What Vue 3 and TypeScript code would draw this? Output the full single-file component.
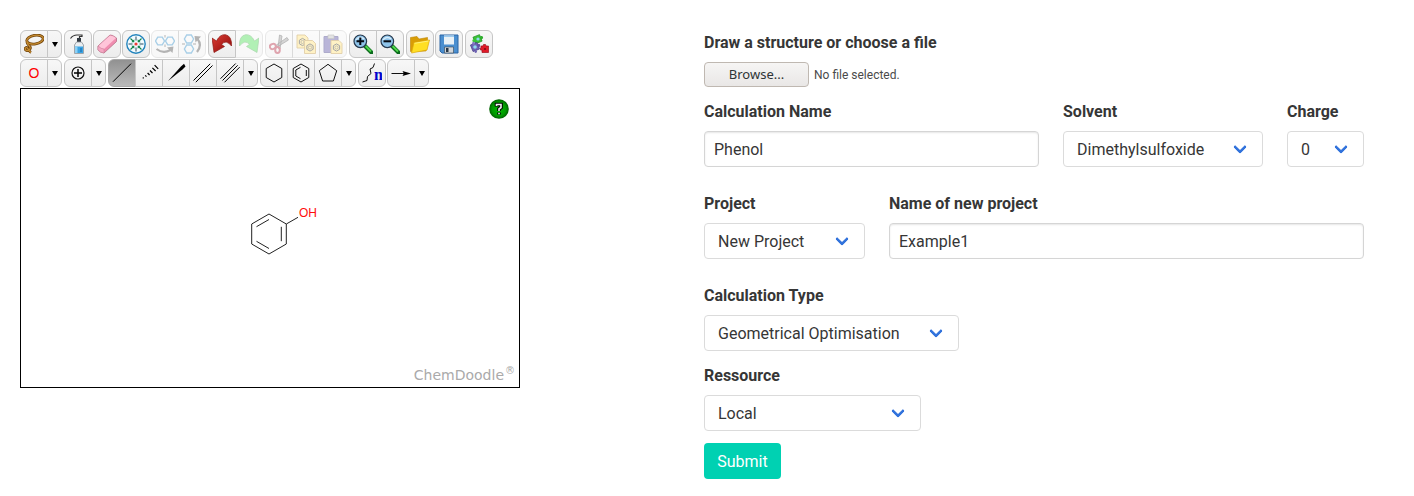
<script setup lang="ts">
import { ref } from 'vue'

interface Tool {
  label: string
  icon: string
  off?: boolean
  active?: boolean
  drop?: boolean
}
interface Group {
  tight?: boolean
  tools: Tool[]
}

const drop: Tool = { label: 'More options', icon: '', drop: true }

const hexagon = (cx: number, cy: number, r: number): string => {
  const h = r * 0.866
  return `M${cx} ${cy - r}L${cx + h} ${cy - r / 2}V${cy + r / 2}L${cx} ${cy + r}L${cx - h} ${cy + r / 2}V${cy - r / 2}Z`
}

const lens = (sign: string): string =>
  `<path d="M12 12L18.500 18.500" stroke="#0a6b1c" stroke-width="4" stroke-linecap="round"/><path d="M12.500 12L18 17.500" stroke="#4fd54b" stroke-width="2"/><circle cx="7.300" cy="7.300" r="6.300" fill="#8fc4ea" stroke="#26384c" stroke-width="1.200"/><path d="M3 6a5 5 0 0 1 8 -1" fill="none" stroke="#d7edfb" stroke-width="1.500"/><path d="${sign}" stroke="#050a12" stroke-width="2"/>`

const undoShape = 'M0 4L2 18.500L12.500 12.500L9.500 10.500Q14 5 19.500 12Q20 2 13.500 .7Q8 0 4.500 7Z'

const noteArt = (x: number, y: number): string =>
  `<path d="M${x} ${y}h8l3 3v10h-11z" fill="#ffe070" stroke="#b88a28" stroke-width=".9"/><path d="${hexagon(x + 5.5, y + 7, 3.6)}" fill="none" stroke="#222" stroke-width="1"/><circle cx="${x + 5.5}" cy="${y + 7}" r="1.600" fill="none" stroke="#222" stroke-width=".6"/>`

const topRow: Group[] = [
  {
    tools: [
      {
        label: 'Lasso',
        icon: '<g fill="none"><g stroke="#704208" stroke-width="2.800"><ellipse cx="11" cy="5.600" rx="8.300" ry="4.300" transform="rotate(-10 11 5.600)"/><path d="M3 8C3 12 8 12 6 15C4 18 0 16 1.500 14C4 12 4 17 7 18.500"/></g><g stroke="#c58c32" stroke-width="1.300"><ellipse cx="11" cy="5.600" rx="8.300" ry="4.300" transform="rotate(-10 11 5.600)"/><path d="M3 8C3 12 8 12 6 15C4 18 0 16 1.500 14C4 12 4 17 7 18.500"/></g></g>',
      },
      drop,
    ],
  },
  {
    tools: [
      {
        label: 'Clear',
        icon: '<path d="M2.500 4.500Q5 1 9 1H14V2.500H11.500V5" fill="none" stroke="#333" stroke-width="1.200"/><path d="M9 4h4v4h-4z" fill="#303840"/><path d="M8.500 8h5l2 3v8.500h-9v-8.500z" fill="#e9edf0" stroke="#8a9299" stroke-width=".8"/><path d="M7 12.500h8v6.500h-8z" fill="#3ba4e4"/><path d="M7 12.500h2.500v6.500h-2.500z" fill="#8bd0f5"/><path d="M13 14v4" stroke="#1769a8"/>',
      },
    ],
  },
  {
    tight: true,
    tools: [
      {
        label: 'Eraser',
        icon: '<path d="M1 12L13 1Q15 .5 19.500 4V7.500L7 19Q3 18.500 1 16z" fill="#f08db0" stroke="#b66e87" stroke-width=".8"/><path d="M1.500 12L13 1.500Q16 1.500 19 4L7 15Q4 15 1.500 12z" fill="#ffc5d9"/><path d="M1 12Q4 15 7 15V19Q3 18.500 1 16z" fill="#f5a8c3" stroke="#c7829a" stroke-width=".5"/>',
      },
    ],
  },
  {
    tight: true,
    tools: [
      {
        label: 'Optimize structure',
        icon: '<circle cx="10" cy="10" r="9.200" fill="#f2fbff" stroke="#2384bd" stroke-width="1.400"/><path d="M4.500 4.500L7.500 7.500M15.500 4.500L12.500 7.500M4.500 15.500L7.500 12.500M15.500 15.500L12.500 12.500" stroke="#13834a" stroke-width="1.100"/><path d="M8.300 5.300V8.300H5.300zM11.700 5.300V8.300H14.700zM8.300 14.700V11.700H5.300zM11.700 14.700V11.700H14.700z" fill="#13834a"/><path d="M10 2.500V6.500M10 13.500V17.500M2.500 10H6.500M13.500 10H17.500" stroke="#27485c" stroke-width="1"/><circle cx="10" cy="10" r="1.600" fill="#ee3c35"/>',
      },
    ],
  },
  {
    tight: true,
    tools: [
      {
        label: 'Flip horizontally',
        off: true,
        icon: `<g fill="none" stroke="#2888c4" stroke-width="1.400"><path transform="rotate(90 5 7)" d="${hexagon(5, 7, 4.5)}"/><path transform="rotate(90 15 7)" d="${hexagon(15, 7, 4.5)}"/></g><path d="M10 1v2.500M10 10.500v2.500" stroke="#444"/><path d="M1.500 15Q8 20 15.500 16" fill="none" stroke="#444" stroke-width="2.200"/><path d="M12 13.500L18.500 12.500L17.500 19z" fill="#444"/>`,
      },
      {
        label: 'Flip vertically',
        off: true,
        icon: `<g fill="none" stroke="#2888c4" stroke-width="1.400"><path transform="rotate(90 7 5)" d="${hexagon(7, 5, 4.6)}"/><path transform="rotate(90 7 15)" d="${hexagon(7, 15, 4.6)}"/></g><path d="M0 10h3M11 10h3" stroke="#444"/><path d="M15 18Q20.500 11 15.500 5" fill="none" stroke="#444" stroke-width="2.200"/><path d="M12.500 2L19 2.500L13.500 8.500z" fill="#444"/>`,
      },
    ],
  },
  {
    tools: [
      {
        label: 'Undo',
        icon: `<defs><linearGradient id="undoRed" x2="1" y2="1"><stop stop-color="#df3f36"/><stop offset="1" stop-color="#8a0808"/></linearGradient></defs><path d="${undoShape}" fill="url(#undoRed)" stroke="#8d1712" stroke-width=".7"/>`,
      },
      {
        label: 'Redo',
        off: true,
        icon: `<path transform="translate(20 0) scale(-1 1)" d="${undoShape}" fill="#3fdc48" stroke="#2f9a38" stroke-width=".7"/>`,
      },
    ],
  },
  {
    tools: [
      {
        label: 'Cut',
        off: true,
        icon: '<path d="M6 12L18 3.500L19.500 6L8 13zM9 14L10.500 1L13 2L11 15z" fill="#999" stroke="#444" stroke-width=".8"/><g fill="none" stroke="#b01d36" stroke-width="2"><ellipse cx="3.800" cy="12.500" rx="3" ry="2.500" transform="rotate(-20 3.800 12.500)"/><ellipse cx="8.500" cy="16" rx="2.300" ry="3"/></g>',
      },
      { label: 'Copy', off: true, icon: noteArt(1, 1) + noteArt(8.5, 6.5) },
      {
        label: 'Paste',
        off: true,
        icon: `<path d="M1 2.500h14v16h-14z" fill="#5248a0" stroke="#373080"/><path d="M5 1h6v3.500h-6z" fill="#bbb" stroke="#777" stroke-width=".7"/>${noteArt(8, 6.5)}`,
      },
    ],
  },
  {
    tools: [
      { label: 'Zoom in', icon: lens('M3.500 7.300H11.100M7.300 3.500V11.100') },
      { label: 'Zoom out', icon: lens('M3.500 7.300H11.100') },
    ],
  },
  {
    tools: [
      {
        label: 'Open',
        icon: '<path d="M.5 17.500V3.500L7 2.500L9 5L17.500 3.500V9L16 17z" fill="#d99d05" stroke="#bd8505" stroke-width=".6"/><path d="M4 8.500L19.500 6L17 16L1.500 19z" fill="#ffdf24" stroke="#dca80a" stroke-width=".7"/><path d="M4.500 9.300L18.500 7" stroke="#fff07b"/>',
      },
    ],
  },
  {
    tight: true,
    tools: [
      {
        label: 'Save',
        icon: '<path d="M1 1h18v18H3L1 17z" fill="#4a8fd0" stroke="#2a64a4"/><path d="M5 1.500h10v9H5z" fill="#e9f1f6"/><path d="M5 1.500h10v1.500H5z" fill="#9dcaed"/><path d="M5.500 13h9v6h-9z" fill="#d2d6da" stroke="#344452" stroke-width=".6"/><path d="M7 14h2.500v4H7z" fill="#263645"/>',
      },
    ],
  },
  {
    tools: [
      {
        label: 'Templates',
        icon: '<g transform="rotate(-22 9 5)"><path d="M5 1.500h7v7H5z" fill="#3bc437" stroke="#1f8f25" stroke-width=".7"/><circle cx="4.500" cy="5" r="1.500" fill="#3bc437"/><circle cx="12.800" cy="5" r="1.600" fill="#2fae2d"/></g><g transform="rotate(-22 6 13)"><path d="M2.500 9.500h7v7h-7z" fill="#6f63b4" stroke="#463c88" stroke-width=".7"/><circle cx="6" cy="9" r="1.500" fill="#8478c4"/><circle cx="10" cy="13" r="1.600" fill="#5f53a6"/><circle cx="5" cy="17.500" r="1.300" fill="#6f63b4"/></g><path d="M12 12h2l.5-1.500h2L17 12h2.500v6.500H13V16h-1.500v-2H12z" fill="#e01a28" stroke="#9e101c" stroke-width=".7"/><g fill="#8fd8ee"><circle cx="9" cy="5" r="1.600"/><circle cx="6" cy="13" r="1.800"/></g><circle cx="16" cy="15" r="1.100" fill="#7a0a14"/>',
      },
    ],
  },
]

const bottomRow: Group[] = [
  {
    tools: [
      {
        label: 'Oxygen',
        icon: '<text x="10" y="15" text-anchor="middle" font-family="Liberation Sans, sans-serif" font-size="14" fill="#f00">O</text>',
      },
      drop,
    ],
  },
  {
    tools: [
      {
        label: 'Increase charge',
        icon: '<circle cx="10" cy="10" r="6" fill="none" stroke="#111" stroke-width="1.200"/><path d="M6 10H14M10 6V14" stroke="#000" stroke-width="1.500"/>',
      },
      drop,
    ],
  },
  {
    tools: [
      { label: 'Single bond', active: true, icon: '<path d="M1 18.700L19 .7" stroke="#000"/>' },
      {
        label: 'Recessed bond',
        icon: '<path d="M3.800 14.500l.8.800M6.200 12.300l1.300 1.300M8.600 10l2 2M11 7.500l2.500 2.500M13.400 4.800l3.200 3.200M15.600 2.200l3.600 3.600" stroke="#000" stroke-width="1.200"/>',
      },
      { label: 'Protruding bond', icon: '<path d="M2 18L14.700 3.700L18 .7L19.500 3.500L16.500 6.500z" fill="#000"/>' },
      { label: 'Double bond', icon: '<path d="M.5 17.500L17.200 .8M2.800 19.200L19.500 2.500" stroke="#000"/>' },
      { label: 'Triple bond', icon: '<path d="M.5 15.700L15.700 .5M2.500 17.500L17.700 2.300M4.500 19.300L19.700 4.100" stroke="#000"/>' },
      drop,
    ],
  },
  {
    tools: [
      { label: 'Cyclohexane ring', icon: `<path d="${hexagon(10, 10, 9)}" fill="none" stroke="#111"/>` },
      {
        label: 'Benzene ring',
        icon: `<path d="${hexagon(10, 10, 9)}M9.500 4.300L4.800 7V13L9.500 15.700M15.300 7V13" fill="none" stroke="#111"/>`,
      },
      { label: 'Cyclopentane ring', icon: '<path d="M10 1.300L18.700 7.700L15.400 18H4.600L1.300 7.700Z" fill="none" stroke="#111"/>' },
      drop,
    ],
  },
  {
    tools: [
      {
        label: 'Carbon chain',
        icon: '<path d="M.5 19L5 17.500L5.500 13.500L9 10.500L8 6L11 4.500L12.500 .5" fill="none" stroke="#111"/><text x="12" y="17" font-family="Liberation Serif, serif" font-weight="700" font-size="16" fill="#00c">n</text>',
      },
    ],
  },
  {
    tight: true,
    tools: [
      { label: 'Arrow', icon: '<path d="M.5 10.500H14" stroke="#111"/><path d="M11.500 8L20 10.500L11.500 13L12.800 10.500z" fill="#000"/>' },
      drop,
    ],
  },
]

const rows: Group[][] = [topRow, bottomRow]

const calculationName = ref<string>('Phenol')
const solvent = ref<string>('Dimethylsulfoxide')
const charge = ref<string>('0')
const project = ref<string>('New Project')
const projectName = ref<string>('Example1')
const calculationType = ref<string>('Geometrical Optimisation')
const resource = ref<string>('Local')
const fileName = ref<string>('No file selected.')
const picker = ref<HTMLInputElement | null>(null)

function onFile(event: Event): void {
  const files = (event.target as HTMLInputElement).files
  fileName.value = files && files.length ? files[0].name : 'No file selected.'
}
</script>

<template>
  <main class="page">
    <section class="sketcher" aria-label="Structure editor">
      <div v-for="(row, r) in rows" :key="r" class="toolbar">
        <div v-for="(group, g) in row" :key="g" class="group" :class="{ tight: group.tight }">
          <button
            v-for="(tool, t) in group.tools"
            :key="t"
            type="button"
            class="tool"
            :class="{ drop: tool.drop, active: tool.active }"
            :disabled="tool.off"
            :aria-label="tool.label"
          >
            <svg v-if="tool.drop" width="6" height="5" viewBox="0 0 6 5"><path d="M0 0H6L3 5z" /></svg>
            <svg v-else width="20" height="20" viewBox="0 0 20 20" v-html="tool.icon"></svg>
          </button>
        </div>
      </div>
      <div class="canvas">
        <svg class="molecule" width="72" height="56" viewBox="0 0 72 56" role="img" aria-label="Phenol">
          <path
            d="M21 10L38.300 20V40L21 50L3.700 40V20ZM21 15.500L8.500 22.700M8.500 37.300L21 44.500M33.300 22.800V37.200M38.300 20L50 13.300"
            fill="none"
            stroke="#222"
          />
          <text x="51" y="13">OH</text>
        </svg>
        <button type="button" class="help" aria-label="Help">
          <svg width="20" height="20" viewBox="0 0 20 20">
            <defs>
              <radialGradient id="helpGreen">
                <stop offset="0" stop-color="#00b800" />
                <stop offset=".7" stop-color="#009b00" />
                <stop offset="1" stop-color="#006000" />
              </radialGradient>
            </defs>
            <circle cx="10" cy="10" r="9.800" fill="url(#helpGreen)" />
            <g fill="none">
              <path d="M7.500 7.500V5.500H12V8.500L10 10V12M10 13.500V15.500" stroke="#000" stroke-width="3.600" />
              <path d="M7.500 7V5.500H12V8.500L10 10V12M10 13.700V15.200" stroke="#eee" stroke-width="1.600" />
            </g>
          </svg>
        </button>
        <div class="brand">ChemDoodle<span class="mark">®</span></div>
      </div>
    </section>

    <form class="form" @submit.prevent>
      <div class="field">
        <label for="file">Draw a structure or choose a file</label>
        <div class="file">
          <button type="button" class="browse" @click="picker?.click()">Browse...</button>
          <span>{{ fileName }}</span>
          <input id="file" ref="picker" type="file" hidden @change="onFile" />
        </div>
      </div>

      <div class="columns">
        <div class="field grow">
          <label for="name">Calculation Name</label>
          <input id="name" v-model="calculationName" class="input" type="text" />
        </div>
        <div class="field">
          <label for="solvent">Solvent</label>
          <div class="select solvent">
            <select id="solvent" v-model="solvent"><option>Dimethylsulfoxide</option></select>
          </div>
        </div>
        <div class="field">
          <label for="charge">Charge</label>
          <div class="select charge">
            <select id="charge" v-model="charge"><option>0</option></select>
          </div>
        </div>
      </div>

      <div class="columns">
        <div class="field">
          <label for="project">Project</label>
          <div class="select project">
            <select id="project" v-model="project"><option>New Project</option></select>
          </div>
        </div>
        <div class="field grow">
          <label for="project-name">Name of new project</label>
          <input id="project-name" v-model="projectName" class="input" type="text" />
        </div>
      </div>

      <div class="field">
        <label for="type">Calculation Type</label>
        <div class="select type">
          <select id="type" v-model="calculationType"><option>Geometrical Optimisation</option></select>
        </div>
      </div>
      <div class="field">
        <label for="resource">Ressource</label>
        <div class="select resource">
          <select id="resource" v-model="resource"><option>Local</option></select>
        </div>
      </div>
      <button type="submit" class="submit">Submit</button>
    </form>
  </main>
</template>

<style>
body {
  margin: 0;
  background: #fff;
}
</style>

<style scoped>
.page,
.page * {
  box-sizing: border-box;
}
.page {
  display: grid;
  grid-template-columns: 342fr 330fr;
  align-items: start;
  padding: 30px 50px 16px 20px;
  font: 16px/24px Roboto, sans-serif;
  color: #363636;
}
.sketcher {
  max-width: 500px;
}
.toolbar {
  display: flex;
  gap: 2px;
  margin-bottom: 1px;
}
.group {
  display: flex;
}
.group.tight {
  margin-left: -1px;
}
.tool {
  display: flex;
  align-items: center;
  justify-content: center;
  width: 28px;
  height: 28px;
  padding: 0;
  border: 1px solid #c6c6c6;
  background: linear-gradient(#f7f7f7, #ededed);
}
.tool + .tool {
  margin-left: -1px;
}
.tool svg {
  display: block;
  flex: none;
}
.tool:first-child {
  border-top-left-radius: 6px;
  border-bottom-left-radius: 6px;
}
.tool:last-child {
  border-top-right-radius: 6px;
  border-bottom-right-radius: 6px;
}
.tool.drop {
  width: 15px;
}
.tool.active {
  border-color: #aaa;
  background: linear-gradient(#919191, #bababa);
}
.tool:disabled {
  opacity: 0.4;
}
.canvas {
  display: flex;
  position: relative;
  height: 300px;
  border: 1px solid #000;
  background: #fff;
}
.molecule {
  position: absolute;
  left: 227px;
  top: 115px;
}
.molecule text {
  font: 12px 'Liberation Sans', sans-serif;
  fill: #ff0d0d;
}
.help {
  position: absolute;
  top: 10px;
  right: 10px;
  padding: 0;
  border: 0;
  border-radius: 50%;
  background: none;
}
.help svg {
  display: block;
}
.brand {
  display: flex;
  align-items: flex-start;
  gap: 1px;
  margin: auto 4px 2px auto;
  font: 14px/20px 'DejaVu Sans', sans-serif;
  color: #aaa;
}
.mark {
  font-size: 10px;
  line-height: 12px;
}
.form {
  display: flex;
  flex-direction: column;
  gap: 12px;
}
.field label {
  display: block;
  margin-bottom: 6px;
  font-weight: 700;
  line-height: 26px;
}
.grow {
  flex: 1;
  min-width: 0;
}
.file {
  display: flex;
  align-items: center;
  gap: 5px;
  height: 25px;
  font-size: 12px;
  line-height: 26px;
  color: #4a4a4a;
}
.browse {
  width: 105px;
  height: 25px;
  padding: 0 0 2px;
  border: 1px solid #bfb8b1;
  border-radius: 4px;
  background: linear-gradient(#f6f5f4, #e9e7e6);
  font: 13px/20px 'Noto Sans', sans-serif;
  color: #2e3436;
}
.columns {
  display: flex;
  gap: 24px;
  margin-bottom: 12px;
}
.input,
.select select {
  display: block;
  width: 100%;
  height: 36px;
  border: 1px solid #dbdbdb;
  border-radius: 4px;
  background: #fff;
  font: 16px/24px Roboto, sans-serif;
  color: #363636;
}
.input {
  padding: 5px 9px;
  border-color: #d5d5d5;
  box-shadow: inset 0 1px 2px rgba(10, 10, 10, 0.1);
}
.select {
  position: relative;
}
.select select {
  appearance: none;
  padding: 6px 40px 4px 13px;
}
.select::after {
  content: '';
  box-sizing: border-box;
  position: absolute;
  top: 50%;
  right: 18px;
  width: 10px;
  height: 10px;
  margin-top: -7px;
  border: 3px solid #3273dc;
  border-top: 0;
  border-right: 0;
  border-radius: 2px;
  transform: rotate(-45deg);
  pointer-events: none;
}
.solvent {
  width: 200px;
}
.charge {
  width: 77px;
}
.project {
  width: 161px;
}
.type {
  width: 255px;
}
.resource {
  width: 217px;
}
.submit {
  align-self: flex-start;
  min-width: 77px;
  height: 36px;
  padding: 2px 12px 0;
  border: 0;
  border-radius: 4px;
  background: #00d1b2;
  font: 16px/24px Roboto, sans-serif;
  color: #fff;
}
</style>
